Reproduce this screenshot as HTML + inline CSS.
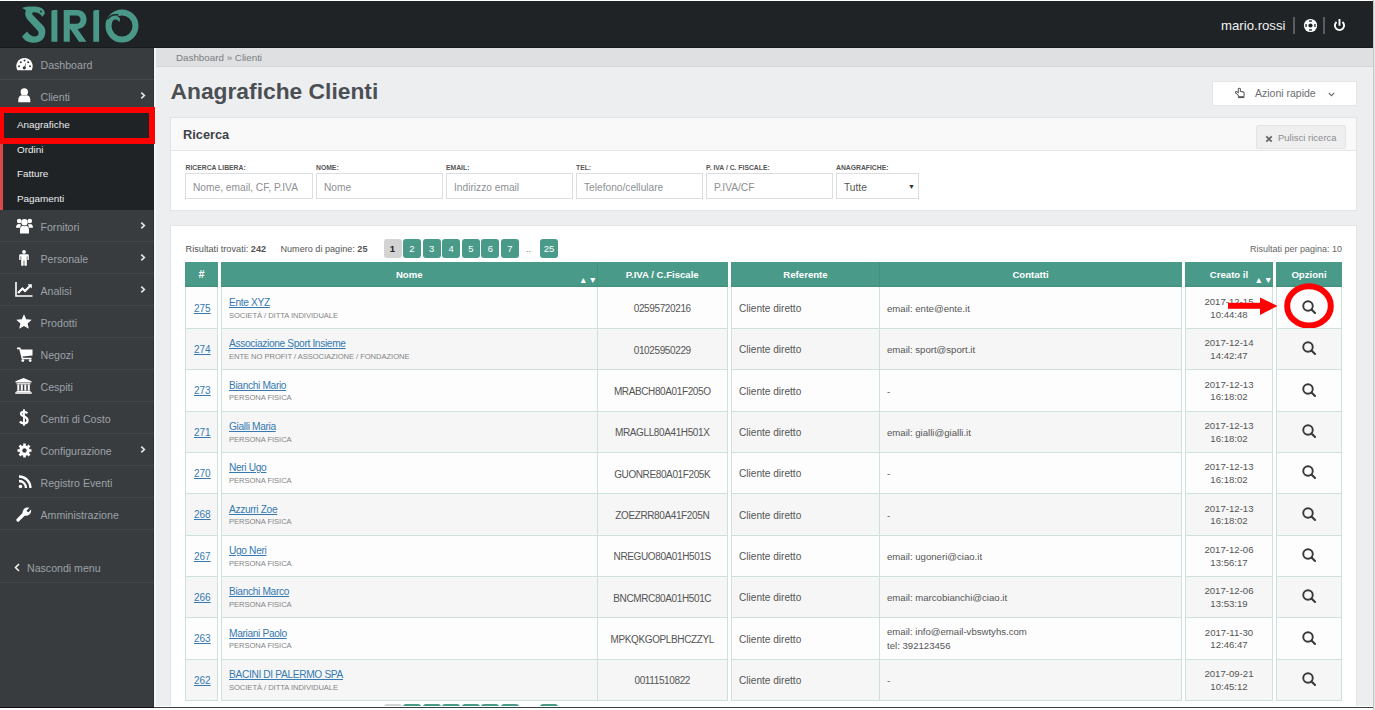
<!DOCTYPE html><html><head><meta charset="utf-8"><style>*{box-sizing:border-box;margin:0;padding:0}
html,body{width:1375px;height:710px;overflow:hidden;background:#fff;font-family:"Liberation Sans",sans-serif}
.abs{position:absolute}
#hdr{position:absolute;left:0;top:1px;width:1373px;height:47px;background:#1f2325;border-bottom:1px solid #181b1c}
#side{position:absolute;left:0;top:48px;width:154px;height:659px;background:#383c3f;box-shadow:inset -1px 0 #303437}
#sideb{position:absolute;left:154px;top:48px;width:2px;height:659px;background:#f4f5f6}
#main{position:absolute;left:156px;top:48px;width:1217px;height:659px;background:#edeef0}
#bc{position:absolute;left:156px;top:48px;width:1217px;height:19px;background:#dfe0e2;border-bottom:1px solid #d6d7d9}
#bc span{position:absolute;left:20px;top:3.5px;font-size:9.8px;color:#7a7d80;white-space:nowrap}
.si{position:absolute;left:0;width:154px;height:32px;border-bottom:1px solid #43474a}
.si .t{position:absolute;left:40.5px;top:11.3px;font-size:10.6px;color:#9ca2a8;white-space:nowrap}
.si svg{position:absolute}
.si .chev{position:absolute;left:140px;top:11px}
#sub{position:absolute;left:0;top:112px;width:154px;height:98.4px;background:#1f2325;border-left:3px solid #d9484a}
.sub{position:absolute;left:14px;font-size:9.9px;color:#eceeef;white-space:nowrap}
h1{position:absolute;left:170.5px;top:78px;font-size:22.8px;font-weight:bold;color:#4b4f54;white-space:nowrap;letter-spacing:0}
.panel{position:absolute;background:#fff;border:1px solid #e2e4e6}
.ph{position:absolute;left:0;top:0;right:0;height:33px;background:#f9f9f9;border-bottom:1px solid #e4e6e8}
.lbl{position:absolute;top:163.5px;font-size:6.8px;font-weight:bold;color:#555;white-space:nowrap}
.inp{position:absolute;top:173px;height:26px;border:1px solid #dcdee0;background:#fff;font-size:10.2px;color:#8d9093;padding:8px 0 0 7px;white-space:nowrap}
.pb{position:absolute;top:239px;width:18px;height:19px;border-radius:3px;background:#4a9a89;color:#fff;font-size:9.5px;text-align:center;line-height:19px}
.th{position:absolute;box-shadow:inset 0 -1.5px #46907f;background:#4a9a89;color:#fff;font-weight:bold;font-size:9.6px;text-align:center;line-height:25px}
.sort{position:absolute;right:-0.5px;top:14.3px;font-size:8.6px;letter-spacing:1px;line-height:8px}
.td{position:absolute;border:1px solid #cfe1dd;border-top:none;border-bottom:none;font-size:9.6px;color:#555}
.num{position:absolute;left:8px;top:15.5px;color:#3579b0;text-decoration:underline;font-size:10px}
.nm{position:absolute;left:7px;top:10px;white-space:nowrap}
.nm a{color:#3579b0;text-decoration:underline;font-size:10.2px;letter-spacing:-0.35px;display:block;height:12px}
.typ{font-size:7.6px;color:#858585;margin-top:1.5px;letter-spacing:-0.05px}
.piva{position:absolute;left:0;right:0;top:16.2px;font-size:10px;letter-spacing:-0.38px;text-align:center;white-space:nowrap}
.ref{position:absolute;left:7px;top:16px;font-size:10.1px;white-space:nowrap}
.cont{position:absolute;left:7px;top:16px;white-space:nowrap;line-height:11px}
.cont2{top:7.6px;line-height:13.4px}
.dt{position:absolute;left:0;right:0;top:9px;text-align:center;line-height:12.8px;white-space:nowrap}
.mag{position:absolute;left:24.9px;top:13px;overflow:visible}
.th2,.th4{box-shadow:inset 0 -1.5px #46907f, inset 1px 0 #43907e}
.th0{font-size:10.8px}
.hl{position:absolute;height:1px;background:#cfe1dd;z-index:3}
</style></head><body>
<div id="hdr">
<svg class="abs" style="left:0;top:-1px" width="160" height="48" viewBox="0 0 160 48">
 <g fill="#4a9887">
  <path d="M22 8 C26 6.5 34 6.3 38 7 C42 7.5 45 10 44.8 13.5 L42.5 16.8 C40.5 14 38 12.2 34 12.2 C32 12.2 31.5 13.5 33 15.2 L43 25.5 C46 28.5 46 33.5 44 37.5 C41.5 42 36 43.2 31 42.5 C27 42 24 40 22 36.5 L27 31.5 C29 34.5 32 36.5 35 36.5 C38 36.5 39.5 33.5 38 31 L27.5 19.5 C25 16.5 24.5 13 26 10.5 C25 9.5 23.5 8.8 22 8Z"/>
  <path d="M51.4 11.5 Q51.6 10 53.5 10 L57.4 10 L57.4 41.8 L51.4 41.8Z"/>
  <path d="M63.7 10 L77 10 C83 10 86.5 14 86.5 19.5 C86.5 25 83 28.5 77.5 29 L86.4 41.8 L79 41.8 L70.5 29.2 L69.8 29.2 L69.8 41.8 L63.7 41.8Z M69.8 15.5 L69.8 23.8 L76.5 23.8 C79 23.8 80.5 22 80.5 19.6 C80.5 17.2 79 15.5 76.5 15.5Z" fill-rule="evenodd"/>
  <path d="M93.3 11.5 Q93.5 10 95.5 10 L99.1 10 L99.1 41.8 L93.3 41.8Z"/>
 </g>
 <circle cx="122" cy="26" r="13.5" fill="none" stroke="#4a9887" stroke-width="6"/>
 <path d="M107.5 19.5 C110 15.5 114 14.2 118.5 15" fill="none" stroke="#1f2325" stroke-width="1.3"/>
 <path d="M111.8 17.6 C114 15.8 118 15.6 119.6 18 C120.2 19.2 120 20.6 119.4 22 C118.2 19.5 115.2 18.8 112.3 20.2Z" fill="#4a9887"/>
 <circle cx="41" cy="11.5" r="0.9" fill="#1f2325"/>
</svg>
<div class="abs" style="left:1221px;top:17px;font-size:13.2px;color:#f2f2f2;white-space:nowrap">mario.rossi</div>
<div class="abs" style="left:1293px;top:15.8px;width:1.6px;height:17px;background:#5a5e61"></div>
<svg class="abs" style="left:1302.8px;top:17.4px" width="15" height="15" viewBox="0 0 15 15"><circle cx="7.5" cy="7.5" r="6.6" fill="#fff"/><circle cx="7.5" cy="7.5" r="2.1" fill="#1f2325"/><g fill="#1f2325"><rect x="6" y="2.4" width="3" height="1.3"/><rect x="6" y="11.3" width="3" height="1.3"/><rect x="2.4" y="6" width="1.3" height="3"/><rect x="11.3" y="6" width="1.3" height="3"/></g></svg>
<div class="abs" style="left:1323.3px;top:15.8px;width:1.6px;height:17px;background:#5a5e61"></div>
<svg class="abs" style="left:1333px;top:17px" width="13" height="14" viewBox="0 0 13 14"><path d="M3.54 3.98 A4.6 4.6 0 1 0 9.46 3.98" fill="none" stroke="#fff" stroke-width="1.9"/><line x1="6.5" y1="1" x2="6.5" y2="7.8" stroke="#fff" stroke-width="1.9"/></svg>
</div>

<div id="side">
 <div class="si" style="top:0">
  <svg style="left:15.5px;top:9.5px" width="17" height="13" viewBox="0 0 17 13" overflow="visible"><path d="M1.34 12.2 A8.2 8.2 0 1 1 15.66 12.2Z" fill="#fff"/><g fill="#383c3f"><circle cx="3" cy="8.3" r="1"/><circle cx="4.8" cy="4.2" r="1"/><circle cx="8.5" cy="2.5" r="1"/><circle cx="12.2" cy="4.2" r="1"/><circle cx="14" cy="8.3" r="1"/><circle cx="8.3" cy="9.8" r="1.6"/><path d="M8 9.5 L10.2 4 L9 9.9Z"/></g></svg>
  <span class="t">Dashboard</span>
 </div>
 <div class="si" style="top:32px;border-bottom:none">
  <svg style="left:17.5px;top:8px" width="13" height="15" viewBox="0 0 13 15"><circle cx="6.3" cy="3.9" r="3.7" fill="#fff"/><path d="M0.3 14.2 L0.3 11.5 C0.3 8.5 2.5 7.3 4 7.2 C5 8 7.6 8 8.6 7.2 C10.3 7.3 12.3 8.5 12.3 11.5 L12.3 14.2Z" fill="#fff"/></svg>
  <span class="t">Clienti</span>
  <svg class="chev" width="6" height="9" viewBox="0 0 6 9"><path d="M1.3 1.6 L4.3 4.5 L1.3 7.4" fill="none" stroke="#e8e8e8" stroke-width="1.7"/></svg>
 </div>
</div>
<div id="sub">
 <span class="sub" style="top:7px">Anagrafiche</span>
 <span class="sub" style="top:31.5px">Ordini</span>
 <span class="sub" style="top:56px">Fatture</span>
 <span class="sub" style="top:80.5px">Pagamenti</span>
</div>
<div id="side2" class="abs" style="left:0;top:210px;width:154px">
 <div class="si" style="top:0">
  <svg style="left:15.5px;top:7.5px" width="17" height="16" viewBox="0 0 17 16"><g fill="#fff"><circle cx="3.2" cy="3" r="2.3"/><circle cx="13.8" cy="3" r="2.3"/><circle cx="8.5" cy="4.2" r="3.2"/><path d="M0 9.8 C0 7 1.5 6 3 6 C4 6.5 4.8 6.5 5.2 6.3 C4.5 7.3 4.3 8.5 4.3 9.8Z"/><path d="M17 9.8 C17 7 15.5 6 14 6 C13 6.5 12.2 6.5 11.8 6.3 C12.5 7.3 12.7 8.5 12.7 9.8Z"/><path d="M4 15.5 L4 11.8 C4 9 5.8 7.8 7 7.8 C8 8.5 9 8.5 10 7.8 C11.2 7.8 13 9 13 11.8 L13 15.5Z"/></g></svg>
  <span class="t">Fornitori</span>
  <svg class="chev" width="6" height="9" viewBox="0 0 6 9"><path d="M1.3 1.6 L4.3 4.5 L1.3 7.4" fill="none" stroke="#e8e8e8" stroke-width="1.7"/></svg>
 </div>
 <div class="si" style="top:32px">
  <svg style="left:19px;top:7.5px" width="10" height="16" viewBox="0 0 10 16"><g fill="#fff"><circle cx="5" cy="1.9" r="1.9"/><path d="M1.6 4.2 L8.4 4.2 C9.3 4.2 9.8 4.8 9.8 5.6 L9.8 10 L8.4 10 L8.4 6.2 L7.8 6.2 L7.8 15.8 L5.4 15.8 L5.4 10.5 L4.6 10.5 L4.6 15.8 L2.2 15.8 L2.2 6.2 L1.6 6.2 L1.6 10 L0.2 10 L0.2 5.6 C0.2 4.8 0.7 4.2 1.6 4.2Z"/></g></svg>
  <span class="t">Personale</span>
  <svg class="chev" width="6" height="9" viewBox="0 0 6 9"><path d="M1.3 1.6 L4.3 4.5 L1.3 7.4" fill="none" stroke="#e8e8e8" stroke-width="1.7"/></svg>
 </div>
 <div class="si" style="top:64px">
  <svg style="left:15px;top:8px" width="18" height="15" viewBox="0 0 18 15"><path d="M1 0 L1 14 L17.5 14" fill="none" stroke="#fff" stroke-width="1.6"/><path d="M3 11 L7.5 6.5 L10 9 L15 4" fill="none" stroke="#fff" stroke-width="2.2"/><path d="M12.5 2.3 L16.8 2.3 L16.8 6.6Z" fill="#fff"/></svg>
  <span class="t">Analisi</span>
  <svg class="chev" width="6" height="9" viewBox="0 0 6 9"><path d="M1.3 1.6 L4.3 4.5 L1.3 7.4" fill="none" stroke="#e8e8e8" stroke-width="1.7"/></svg>
 </div>
 <div class="si" style="top:96px">
  <svg style="left:16px;top:7.5px" width="16" height="16" viewBox="0 0 16 16"><path d="M8 0.3 L10.2 5.3 L15.7 5.8 L11.6 9.4 L12.8 14.8 L8 12 L3.2 14.8 L4.4 9.4 L0.3 5.8 L5.8 5.3Z" fill="#fff"/></svg>
  <span class="t">Prodotti</span>
 </div>
 <div class="si" style="top:128px">
  <svg style="left:16.5px;top:8.5px" width="16" height="15" viewBox="0 0 16 15"><g fill="#fff"><path d="M0 0.5 L3.3 0.5 L4 2.5 L15.5 2.5 L15.5 8.5 L5.6 9.6 L6 10.8 L14.5 10.8 L14.5 12.3 L4.8 12.3 L2.3 2.2 L0 2.2Z"/><circle cx="5.8" cy="13.6" r="1.4"/><circle cx="13.2" cy="13.6" r="1.4"/></g></svg>
  <span class="t">Negozi</span>
 </div>
 <div class="si" style="top:160px">
  <svg style="left:15px;top:7.5px" width="17" height="16" viewBox="0 0 17 16"><g fill="#fff"><path d="M8.5 0 L16.5 3.2 L16.5 4.6 L0.5 4.6 L0.5 3.2Z"/><rect x="1.5" y="5.2" width="14" height="1.2"/><rect x="2.3" y="6.6" width="2" height="6"/><rect x="5.8" y="6.6" width="2" height="6"/><rect x="9.3" y="6.6" width="2" height="6"/><rect x="12.8" y="6.6" width="2" height="6"/><rect x="1.5" y="12.8" width="14" height="1.2"/><rect x="0.3" y="14.2" width="16.4" height="1.6"/></g></svg>
  <span class="t">Cespiti</span>
 </div>
 <div class="si" style="top:192px">
  <svg style="left:19px;top:7px" width="10" height="17" viewBox="0 0 10 17"><path d="M8.3 4.3 C7.5 3.2 6.2 2.8 4.8 2.8 C3 2.8 2 3.7 2 4.8 C2 7.8 8.6 6.8 8.6 11.3 C8.6 13.2 7 14.4 5 14.4 C3.3 14.4 1.8 13.7 0.9 12.5" fill="none" stroke="#fff" stroke-width="2.2"/><rect x="4" y="0.3" width="1.9" height="16.4" fill="#fff"/></svg>
  <span class="t">Centri di Costo</span>
 </div>
 <div class="si" style="top:224px">
  <svg style="left:16.5px;top:8.5px" width="15" height="15" viewBox="0 0 15 15"><g fill="#fff"><circle cx="7.5" cy="7.5" r="5.2"/><g stroke="#fff" stroke-width="2.6"><line x1="7.5" y1="0.5" x2="7.5" y2="14.5"/><line x1="0.5" y1="7.5" x2="14.5" y2="7.5"/><line x1="2.5" y1="2.5" x2="12.5" y2="12.5"/><line x1="12.5" y1="2.5" x2="2.5" y2="12.5"/></g></g><circle cx="7.5" cy="7.5" r="2.2" fill="#383c3f"/></svg>
  <span class="t">Configurazione</span>
  <svg class="chev" width="6" height="9" viewBox="0 0 6 9"><path d="M1.3 1.6 L4.3 4.5 L1.3 7.4" fill="none" stroke="#e8e8e8" stroke-width="1.7"/></svg>
 </div>
 <div class="si" style="top:256px">
  <svg style="left:17.5px;top:9px" width="14" height="14" viewBox="0 0 14 14"><g fill="none" stroke="#fff" stroke-width="2.3"><path d="M1 1.5 A11.5 11.5 0 0 1 12.5 13"/><path d="M1 6 A7 7 0 0 1 8 13"/></g><circle cx="2.5" cy="11.5" r="1.8" fill="#fff"/></svg>
  <span class="t">Registro Eventi</span>
 </div>
 <div class="si" style="top:288px">
  <svg style="left:16px;top:7.5px" width="16" height="16" viewBox="0 0 16 16"><path d="M2 14 L8.5 7.5" stroke="#fff" stroke-width="3.2" stroke-linecap="round"/><path d="M7 9 C5.5 6 7.5 2 11 1.5 C12 1.4 12.8 1.6 13.3 1.8 L10.6 4.5 L11.3 5.8 L12.5 6.3 L15 3.6 C15.4 5.5 14.8 7.5 13 8.8 C11.3 10 9.2 10 7 9Z" fill="#fff"/></svg>
  <span class="t">Amministrazione</span>
 </div>
 <div class="abs" style="left:0;top:320px;width:154px;height:53px;border-bottom:1px solid #43474a">
  <svg class="abs" style="left:14px;top:33px" width="6" height="9" viewBox="0 0 6 9"><path d="M5 1 L1.5 4.5 L5 8" fill="none" stroke="#f0f0f0" stroke-width="1.6"/></svg>
  <span class="abs" style="left:27px;top:32.2px;font-size:10.6px;color:#9ca2a8;white-space:nowrap">Nascondi menu</span>
 </div>
</div>
<div id="sideb"></div>
<div id="main"></div>
<div id="bc"><span>Dashboard » Clienti</span></div>
<h1>Anagrafiche Clienti</h1>
<div class="abs" style="left:1212px;top:81px;width:145px;height:25px;background:#fff;border:1px solid #e3e5e7">
 <svg class="abs" style="left:21px;top:5px" width="12" height="12" viewBox="0 0 12 12"><path d="M4.3 9.6 L4.3 8.2 L2 6.3 C1 5.5 1.6 4 2.8 4.7 L4.3 5.6 L4.3 2 C4.3 0.9 6.4 0.9 6.4 2 L6.4 4.4 L9.1 4.9 C9.9 5.1 10.2 5.7 10.2 6.4 L10 9.6" fill="none" stroke="#606366" stroke-width="1.1"/><rect x="4.1" y="9.2" width="6.1" height="1.9" fill="#505356"/></svg>
 <span class="abs" style="left:42px;top:4.5px;font-size:10.5px;color:#6b6e71;white-space:nowrap">Azioni rapide</span>
 <svg class="abs" style="left:115px;top:10px" width="7" height="5" viewBox="0 0 7 5"><path d="M0.8 0.8 L3.5 3.7 L6.2 0.8" fill="none" stroke="#666" stroke-width="1.1"/></svg>
</div>

<div class="panel" style="left:170.4px;top:117px;width:1186.2px;height:94px">
 <div class="ph"></div>
 <span class="abs" style="left:11.6px;top:8.5px;font-size:12.8px;font-weight:bold;color:#3f4347;white-space:nowrap">Ricerca</span>
 <div class="abs" style="left:1084.6px;top:7px;width:90px;height:24px;background:#efefef;border:1px solid #e4e4e4;border-radius:2px">
  <svg class="abs" style="left:8px;top:8.5px" width="8" height="8" viewBox="0 0 8 8"><path d="M1.3 1.3 L6.7 6.7 M6.7 1.3 L1.3 6.7" stroke="#666" stroke-width="1.9"/></svg>
  <span class="abs" style="left:21px;top:5.5px;font-size:9.5px;color:#8a8d90;white-space:nowrap">Pulisci ricerca</span>
 </div>
</div>
<span class="lbl" style="left:185.5px">RICERCA LIBERA:</span>
<span class="lbl" style="left:316px">NOME:</span>
<span class="lbl" style="left:446px">EMAIL:</span>
<span class="lbl" style="left:576px">TEL:</span>
<span class="lbl" style="left:706px">P. IVA / C. FISCALE:</span>
<span class="lbl" style="left:836px">ANAGRAFICHE:</span>
<div class="inp" style="left:185px;width:128px">Nome, email, CF, P.IVA</div>
<div class="inp" style="left:316px;width:127px">Nome</div>
<div class="inp" style="left:446px;width:127px">Indirizzo email</div>
<div class="inp" style="left:576px;width:127px">Telefono/cellulare</div>
<div class="inp" style="left:706px;width:127px">P.IVA/CF</div>
<div class="inp" style="left:836px;width:83px;color:#555">Tutte<span class="abs" style="left:71px;top:9px;font-size:7px;color:#333">&#9660;</span></div>

<div class="abs" style="left:170.4px;top:225px;width:1186.2px;height:482px;background:#fff;border:1px solid #e2e4e6;border-bottom:none"></div>
<span class="abs" style="left:185.5px;top:244px;font-size:9.2px;color:#555;white-space:nowrap">Risultati trovati: <b>242</b></span>
<span class="abs" style="left:280.5px;top:244px;font-size:9.1px;color:#555;white-space:nowrap">Numero di pagine: <b>25</b></span>
<span class="abs" style="left:1250px;top:244px;font-size:9px;color:#666;white-space:nowrap">Risultati per pagina: 10</span>
<div class="pb" style="left:383.5px;background:#d3d3d3;color:#222;font-weight:bold">1</div>
<div class="pb" style="left:403px">2</div>
<div class="pb" style="left:422.6px">3</div>
<div class="pb" style="left:442.2px">4</div>
<div class="pb" style="left:461.8px">5</div>
<div class="pb" style="left:481.4px">6</div>
<div class="pb" style="left:501px">7</div>
<span class="abs" style="left:526px;top:244px;font-size:9px;color:#777">..</span>
<div class="pb" style="left:540px">25</div>
<div class="pb" style="left:383.5px;top:703.5px;background:#d3d3d3"></div>
<div class="pb" style="left:403px;top:703.5px"></div>
<div class="pb" style="left:422.6px;top:703.5px"></div>
<div class="pb" style="left:442.2px;top:703.5px"></div>
<div class="pb" style="left:461.8px;top:703.5px"></div>
<div class="pb" style="left:481.4px;top:703.5px"></div>
<div class="pb" style="left:501px;top:703.5px"></div>
<div class="pb" style="left:540px;top:703.5px"></div>

<div class="th th0" style="left:185px;width:33px;top:262px;height:25px">#</div><div class="th th1" style="left:221px;width:376.5px;top:262px;height:25px">Nome<span class="sort">&#9650;&#9660;</span></div><div class="th th2" style="left:596.5px;width:131.5px;top:262px;height:25px">P.IVA / C.Fiscale</div><div class="th th3" style="left:731px;width:149px;top:262px;height:25px">Referente</div><div class="th th4" style="left:879px;width:303px;top:262px;height:25px">Contatti</div><div class="th th5" style="left:1185px;width:88px;top:262px;height:25px">Creato il<span class="sort">&#9650;&#9660;</span></div><div class="th th6" style="left:1276px;width:66px;top:262px;height:25px">Opzioni</div><div class="td td0" style="left:185px;width:33px;top:287.00px;height:41.60px;background:#fdfdfd"><a class="num">275</a></div><div class="hl" style="left:185px;width:33px;top:328.00px"></div><div class="td td1" style="left:221px;width:376.5px;top:287.00px;height:41.60px;background:#fdfdfd"><div class="nm"><a>Ente XYZ</a><div class="typ">SOCIETÀ / DITTA INDIVIDUALE</div></div></div><div class="hl" style="left:221px;width:376.5px;top:328.00px"></div><div class="td td2" style="left:596.5px;width:131.5px;top:287.00px;height:41.60px;background:#fdfdfd"><span class="piva">02595720216</span></div><div class="hl" style="left:596.5px;width:131.5px;top:328.00px"></div><div class="td td3" style="left:731px;width:149px;top:287.00px;height:41.60px;background:#fdfdfd"><span class="ref">Cliente diretto</span></div><div class="hl" style="left:731px;width:149px;top:328.00px"></div><div class="td td4" style="left:879px;width:303px;top:287.00px;height:41.60px;background:#fdfdfd"><div class="cont">email: ente@ente.it</div></div><div class="hl" style="left:879px;width:303px;top:328.00px"></div><div class="td td5" style="left:1185px;width:88px;top:287.00px;height:41.60px;background:#fdfdfd"><div class="dt">2017-12-15<br>10:44:48</div></div><div class="hl" style="left:1185px;width:88px;top:328.00px"></div><div class="td td6" style="left:1276px;width:66px;top:287.00px;height:41.60px;background:#fdfdfd"><svg class="mag" width="14" height="14" viewBox="0 0 14 14"><circle cx="6" cy="6" r="4.75" fill="none" stroke="#37393c" stroke-width="1.9"/><line x1="9.5" y1="9.5" x2="13" y2="13" stroke="#37393c" stroke-width="2.1" stroke-linecap="round"/></svg></div><div class="hl" style="left:1276px;width:66px;top:328.00px"></div><div class="td td0" style="left:185px;width:33px;top:328.33px;height:41.53px;background:#f6f6f6"><a class="num">274</a></div><div class="hl" style="left:185px;width:33px;top:369.33px"></div><div class="td td1" style="left:221px;width:376.5px;top:328.33px;height:41.53px;background:#f6f6f6"><div class="nm"><a>Associazione Sport Insieme</a><div class="typ">ENTE NO PROFIT / ASSOCIAZIONE / FONDAZIONE</div></div></div><div class="hl" style="left:221px;width:376.5px;top:369.33px"></div><div class="td td2" style="left:596.5px;width:131.5px;top:328.33px;height:41.53px;background:#f6f6f6"><span class="piva">01025950229</span></div><div class="hl" style="left:596.5px;width:131.5px;top:369.33px"></div><div class="td td3" style="left:731px;width:149px;top:328.33px;height:41.53px;background:#f6f6f6"><span class="ref">Cliente diretto</span></div><div class="hl" style="left:731px;width:149px;top:369.33px"></div><div class="td td4" style="left:879px;width:303px;top:328.33px;height:41.53px;background:#f6f6f6"><div class="cont">email: sport@sport.it</div></div><div class="hl" style="left:879px;width:303px;top:369.33px"></div><div class="td td5" style="left:1185px;width:88px;top:328.33px;height:41.53px;background:#f6f6f6"><div class="dt">2017-12-14<br>14:42:47</div></div><div class="hl" style="left:1185px;width:88px;top:369.33px"></div><div class="td td6" style="left:1276px;width:66px;top:328.33px;height:41.53px;background:#f6f6f6"><svg class="mag" width="14" height="14" viewBox="0 0 14 14"><circle cx="6" cy="6" r="4.75" fill="none" stroke="#37393c" stroke-width="1.9"/><line x1="9.5" y1="9.5" x2="13" y2="13" stroke="#37393c" stroke-width="2.1" stroke-linecap="round"/></svg></div><div class="hl" style="left:1276px;width:66px;top:369.33px"></div><div class="td td0" style="left:185px;width:33px;top:369.67px;height:41.53px;background:#fdfdfd"><a class="num">273</a></div><div class="hl" style="left:185px;width:33px;top:410.67px"></div><div class="td td1" style="left:221px;width:376.5px;top:369.67px;height:41.53px;background:#fdfdfd"><div class="nm"><a>Bianchi Mario</a><div class="typ">PERSONA FISICA</div></div></div><div class="hl" style="left:221px;width:376.5px;top:410.67px"></div><div class="td td2" style="left:596.5px;width:131.5px;top:369.67px;height:41.53px;background:#fdfdfd"><span class="piva">MRABCH80A01F205O</span></div><div class="hl" style="left:596.5px;width:131.5px;top:410.67px"></div><div class="td td3" style="left:731px;width:149px;top:369.67px;height:41.53px;background:#fdfdfd"><span class="ref">Cliente diretto</span></div><div class="hl" style="left:731px;width:149px;top:410.67px"></div><div class="td td4" style="left:879px;width:303px;top:369.67px;height:41.53px;background:#fdfdfd"><div class="cont">-</div></div><div class="hl" style="left:879px;width:303px;top:410.67px"></div><div class="td td5" style="left:1185px;width:88px;top:369.67px;height:41.53px;background:#fdfdfd"><div class="dt">2017-12-13<br>16:18:02</div></div><div class="hl" style="left:1185px;width:88px;top:410.67px"></div><div class="td td6" style="left:1276px;width:66px;top:369.67px;height:41.53px;background:#fdfdfd"><svg class="mag" width="14" height="14" viewBox="0 0 14 14"><circle cx="6" cy="6" r="4.75" fill="none" stroke="#37393c" stroke-width="1.9"/><line x1="9.5" y1="9.5" x2="13" y2="13" stroke="#37393c" stroke-width="2.1" stroke-linecap="round"/></svg></div><div class="hl" style="left:1276px;width:66px;top:410.67px"></div><div class="td td0" style="left:185px;width:33px;top:411.00px;height:41.53px;background:#f6f6f6"><a class="num">271</a></div><div class="hl" style="left:185px;width:33px;top:452.00px"></div><div class="td td1" style="left:221px;width:376.5px;top:411.00px;height:41.53px;background:#f6f6f6"><div class="nm"><a>Gialli Maria</a><div class="typ">PERSONA FISICA</div></div></div><div class="hl" style="left:221px;width:376.5px;top:452.00px"></div><div class="td td2" style="left:596.5px;width:131.5px;top:411.00px;height:41.53px;background:#f6f6f6"><span class="piva">MRAGLL80A41H501X</span></div><div class="hl" style="left:596.5px;width:131.5px;top:452.00px"></div><div class="td td3" style="left:731px;width:149px;top:411.00px;height:41.53px;background:#f6f6f6"><span class="ref">Cliente diretto</span></div><div class="hl" style="left:731px;width:149px;top:452.00px"></div><div class="td td4" style="left:879px;width:303px;top:411.00px;height:41.53px;background:#f6f6f6"><div class="cont">email: gialli@gialli.it</div></div><div class="hl" style="left:879px;width:303px;top:452.00px"></div><div class="td td5" style="left:1185px;width:88px;top:411.00px;height:41.53px;background:#f6f6f6"><div class="dt">2017-12-13<br>16:18:02</div></div><div class="hl" style="left:1185px;width:88px;top:452.00px"></div><div class="td td6" style="left:1276px;width:66px;top:411.00px;height:41.53px;background:#f6f6f6"><svg class="mag" width="14" height="14" viewBox="0 0 14 14"><circle cx="6" cy="6" r="4.75" fill="none" stroke="#37393c" stroke-width="1.9"/><line x1="9.5" y1="9.5" x2="13" y2="13" stroke="#37393c" stroke-width="2.1" stroke-linecap="round"/></svg></div><div class="hl" style="left:1276px;width:66px;top:452.00px"></div><div class="td td0" style="left:185px;width:33px;top:452.33px;height:41.53px;background:#fdfdfd"><a class="num">270</a></div><div class="hl" style="left:185px;width:33px;top:493.33px"></div><div class="td td1" style="left:221px;width:376.5px;top:452.33px;height:41.53px;background:#fdfdfd"><div class="nm"><a>Neri Ugo</a><div class="typ">PERSONA FISICA</div></div></div><div class="hl" style="left:221px;width:376.5px;top:493.33px"></div><div class="td td2" style="left:596.5px;width:131.5px;top:452.33px;height:41.53px;background:#fdfdfd"><span class="piva">GUONRE80A01F205K</span></div><div class="hl" style="left:596.5px;width:131.5px;top:493.33px"></div><div class="td td3" style="left:731px;width:149px;top:452.33px;height:41.53px;background:#fdfdfd"><span class="ref">Cliente diretto</span></div><div class="hl" style="left:731px;width:149px;top:493.33px"></div><div class="td td4" style="left:879px;width:303px;top:452.33px;height:41.53px;background:#fdfdfd"><div class="cont">-</div></div><div class="hl" style="left:879px;width:303px;top:493.33px"></div><div class="td td5" style="left:1185px;width:88px;top:452.33px;height:41.53px;background:#fdfdfd"><div class="dt">2017-12-13<br>16:18:02</div></div><div class="hl" style="left:1185px;width:88px;top:493.33px"></div><div class="td td6" style="left:1276px;width:66px;top:452.33px;height:41.53px;background:#fdfdfd"><svg class="mag" width="14" height="14" viewBox="0 0 14 14"><circle cx="6" cy="6" r="4.75" fill="none" stroke="#37393c" stroke-width="1.9"/><line x1="9.5" y1="9.5" x2="13" y2="13" stroke="#37393c" stroke-width="2.1" stroke-linecap="round"/></svg></div><div class="hl" style="left:1276px;width:66px;top:493.33px"></div><div class="td td0" style="left:185px;width:33px;top:493.67px;height:41.53px;background:#f6f6f6"><a class="num">268</a></div><div class="hl" style="left:185px;width:33px;top:534.67px"></div><div class="td td1" style="left:221px;width:376.5px;top:493.67px;height:41.53px;background:#f6f6f6"><div class="nm"><a>Azzurri Zoe</a><div class="typ">PERSONA FISICA</div></div></div><div class="hl" style="left:221px;width:376.5px;top:534.67px"></div><div class="td td2" style="left:596.5px;width:131.5px;top:493.67px;height:41.53px;background:#f6f6f6"><span class="piva">ZOEZRR80A41F205N</span></div><div class="hl" style="left:596.5px;width:131.5px;top:534.67px"></div><div class="td td3" style="left:731px;width:149px;top:493.67px;height:41.53px;background:#f6f6f6"><span class="ref">Cliente diretto</span></div><div class="hl" style="left:731px;width:149px;top:534.67px"></div><div class="td td4" style="left:879px;width:303px;top:493.67px;height:41.53px;background:#f6f6f6"><div class="cont">-</div></div><div class="hl" style="left:879px;width:303px;top:534.67px"></div><div class="td td5" style="left:1185px;width:88px;top:493.67px;height:41.53px;background:#f6f6f6"><div class="dt">2017-12-13<br>16:18:02</div></div><div class="hl" style="left:1185px;width:88px;top:534.67px"></div><div class="td td6" style="left:1276px;width:66px;top:493.67px;height:41.53px;background:#f6f6f6"><svg class="mag" width="14" height="14" viewBox="0 0 14 14"><circle cx="6" cy="6" r="4.75" fill="none" stroke="#37393c" stroke-width="1.9"/><line x1="9.5" y1="9.5" x2="13" y2="13" stroke="#37393c" stroke-width="2.1" stroke-linecap="round"/></svg></div><div class="hl" style="left:1276px;width:66px;top:534.67px"></div><div class="td td0" style="left:185px;width:33px;top:535.00px;height:41.53px;background:#fdfdfd"><a class="num">267</a></div><div class="hl" style="left:185px;width:33px;top:576.00px"></div><div class="td td1" style="left:221px;width:376.5px;top:535.00px;height:41.53px;background:#fdfdfd"><div class="nm"><a>Ugo Neri</a><div class="typ">PERSONA FISICA</div></div></div><div class="hl" style="left:221px;width:376.5px;top:576.00px"></div><div class="td td2" style="left:596.5px;width:131.5px;top:535.00px;height:41.53px;background:#fdfdfd"><span class="piva">NREGUO80A01H501S</span></div><div class="hl" style="left:596.5px;width:131.5px;top:576.00px"></div><div class="td td3" style="left:731px;width:149px;top:535.00px;height:41.53px;background:#fdfdfd"><span class="ref">Cliente diretto</span></div><div class="hl" style="left:731px;width:149px;top:576.00px"></div><div class="td td4" style="left:879px;width:303px;top:535.00px;height:41.53px;background:#fdfdfd"><div class="cont">email: ugoneri@ciao.it</div></div><div class="hl" style="left:879px;width:303px;top:576.00px"></div><div class="td td5" style="left:1185px;width:88px;top:535.00px;height:41.53px;background:#fdfdfd"><div class="dt">2017-12-06<br>13:56:17</div></div><div class="hl" style="left:1185px;width:88px;top:576.00px"></div><div class="td td6" style="left:1276px;width:66px;top:535.00px;height:41.53px;background:#fdfdfd"><svg class="mag" width="14" height="14" viewBox="0 0 14 14"><circle cx="6" cy="6" r="4.75" fill="none" stroke="#37393c" stroke-width="1.9"/><line x1="9.5" y1="9.5" x2="13" y2="13" stroke="#37393c" stroke-width="2.1" stroke-linecap="round"/></svg></div><div class="hl" style="left:1276px;width:66px;top:576.00px"></div><div class="td td0" style="left:185px;width:33px;top:576.33px;height:41.53px;background:#f6f6f6"><a class="num">266</a></div><div class="hl" style="left:185px;width:33px;top:617.33px"></div><div class="td td1" style="left:221px;width:376.5px;top:576.33px;height:41.53px;background:#f6f6f6"><div class="nm"><a>Bianchi Marco</a><div class="typ">PERSONA FISICA</div></div></div><div class="hl" style="left:221px;width:376.5px;top:617.33px"></div><div class="td td2" style="left:596.5px;width:131.5px;top:576.33px;height:41.53px;background:#f6f6f6"><span class="piva">BNCMRC80A01H501C</span></div><div class="hl" style="left:596.5px;width:131.5px;top:617.33px"></div><div class="td td3" style="left:731px;width:149px;top:576.33px;height:41.53px;background:#f6f6f6"><span class="ref">Cliente diretto</span></div><div class="hl" style="left:731px;width:149px;top:617.33px"></div><div class="td td4" style="left:879px;width:303px;top:576.33px;height:41.53px;background:#f6f6f6"><div class="cont">email: marcobianchi@ciao.it</div></div><div class="hl" style="left:879px;width:303px;top:617.33px"></div><div class="td td5" style="left:1185px;width:88px;top:576.33px;height:41.53px;background:#f6f6f6"><div class="dt">2017-12-06<br>13:53:19</div></div><div class="hl" style="left:1185px;width:88px;top:617.33px"></div><div class="td td6" style="left:1276px;width:66px;top:576.33px;height:41.53px;background:#f6f6f6"><svg class="mag" width="14" height="14" viewBox="0 0 14 14"><circle cx="6" cy="6" r="4.75" fill="none" stroke="#37393c" stroke-width="1.9"/><line x1="9.5" y1="9.5" x2="13" y2="13" stroke="#37393c" stroke-width="2.1" stroke-linecap="round"/></svg></div><div class="hl" style="left:1276px;width:66px;top:617.33px"></div><div class="td td0" style="left:185px;width:33px;top:617.67px;height:41.53px;background:#fdfdfd"><a class="num">263</a></div><div class="hl" style="left:185px;width:33px;top:658.67px"></div><div class="td td1" style="left:221px;width:376.5px;top:617.67px;height:41.53px;background:#fdfdfd"><div class="nm"><a>Mariani Paolo</a><div class="typ">PERSONA FISICA</div></div></div><div class="hl" style="left:221px;width:376.5px;top:658.67px"></div><div class="td td2" style="left:596.5px;width:131.5px;top:617.67px;height:41.53px;background:#fdfdfd"><span class="piva">MPKQKGOPLBHCZZYL</span></div><div class="hl" style="left:596.5px;width:131.5px;top:658.67px"></div><div class="td td3" style="left:731px;width:149px;top:617.67px;height:41.53px;background:#fdfdfd"><span class="ref">Cliente diretto</span></div><div class="hl" style="left:731px;width:149px;top:658.67px"></div><div class="td td4" style="left:879px;width:303px;top:617.67px;height:41.53px;background:#fdfdfd"><div class="cont cont2">email: info@email-vbswtyhs.com<br>tel: 392123456</div></div><div class="hl" style="left:879px;width:303px;top:658.67px"></div><div class="td td5" style="left:1185px;width:88px;top:617.67px;height:41.53px;background:#fdfdfd"><div class="dt">2017-11-30<br>12:46:47</div></div><div class="hl" style="left:1185px;width:88px;top:658.67px"></div><div class="td td6" style="left:1276px;width:66px;top:617.67px;height:41.53px;background:#fdfdfd"><svg class="mag" width="14" height="14" viewBox="0 0 14 14"><circle cx="6" cy="6" r="4.75" fill="none" stroke="#37393c" stroke-width="1.9"/><line x1="9.5" y1="9.5" x2="13" y2="13" stroke="#37393c" stroke-width="2.1" stroke-linecap="round"/></svg></div><div class="hl" style="left:1276px;width:66px;top:658.67px"></div><div class="td td0" style="left:185px;width:33px;top:659.00px;height:41.53px;background:#f6f6f6"><a class="num">262</a></div><div class="hl" style="left:185px;width:33px;top:700.00px"></div><div class="td td1" style="left:221px;width:376.5px;top:659.00px;height:41.53px;background:#f6f6f6"><div class="nm"><a>BACINI DI PALERMO SPA</a><div class="typ">SOCIETÀ / DITTA INDIVIDUALE</div></div></div><div class="hl" style="left:221px;width:376.5px;top:700.00px"></div><div class="td td2" style="left:596.5px;width:131.5px;top:659.00px;height:41.53px;background:#f6f6f6"><span class="piva">00111510822</span></div><div class="hl" style="left:596.5px;width:131.5px;top:700.00px"></div><div class="td td3" style="left:731px;width:149px;top:659.00px;height:41.53px;background:#f6f6f6"><span class="ref">Cliente diretto</span></div><div class="hl" style="left:731px;width:149px;top:700.00px"></div><div class="td td4" style="left:879px;width:303px;top:659.00px;height:41.53px;background:#f6f6f6"><div class="cont">-</div></div><div class="hl" style="left:879px;width:303px;top:700.00px"></div><div class="td td5" style="left:1185px;width:88px;top:659.00px;height:41.53px;background:#f6f6f6"><div class="dt">2017-09-21<br>10:45:12</div></div><div class="hl" style="left:1185px;width:88px;top:700.00px"></div><div class="td td6" style="left:1276px;width:66px;top:659.00px;height:41.53px;background:#f6f6f6"><svg class="mag" width="14" height="14" viewBox="0 0 14 14"><circle cx="6" cy="6" r="4.75" fill="none" stroke="#37393c" stroke-width="1.9"/><line x1="9.5" y1="9.5" x2="13" y2="13" stroke="#37393c" stroke-width="2.1" stroke-linecap="round"/></svg></div><div class="hl" style="left:1276px;width:66px;top:700.00px"></div>
<div class="abs" style="left:-2px;top:107px;width:157px;height:37px;border:6px solid #ff0000"></div>
<svg class="abs" style="left:1220px;top:275px" width="125" height="62" viewBox="1220 275 125 62">
 <rect x="1228" y="302.8" width="33" height="6" fill="#f00"/>
 <path d="M1260 297.4 L1277.5 306 L1260 315Z" fill="#f00"/>
 <ellipse cx="1309" cy="305.9" rx="21.8" ry="19.7" fill="none" stroke="#f00" stroke-width="6"/>
</svg>
<div class="abs" style="left:154px;top:706px;width:1219px;height:1px;background:#fff"></div>
<div class="abs" style="left:0;top:707px;width:1373px;height:1.2px;background:#384044"></div>
<div class="abs" style="left:0;top:707px;width:154px;height:1.2px;background:#0b1013"></div>
<div class="abs" style="left:0;top:708.2px;width:1375px;height:1.8px;background:#fff"></div>
<div class="abs" style="left:1373px;top:0;width:1px;height:710px;background:#c6c6c6"></div>
<div class="abs" style="left:1374px;top:0;width:1px;height:710px;background:#e6e6e6"></div>
<div class="abs" style="left:0;top:0;width:1373px;height:1px;background:#fff"></div>

</body></html>
